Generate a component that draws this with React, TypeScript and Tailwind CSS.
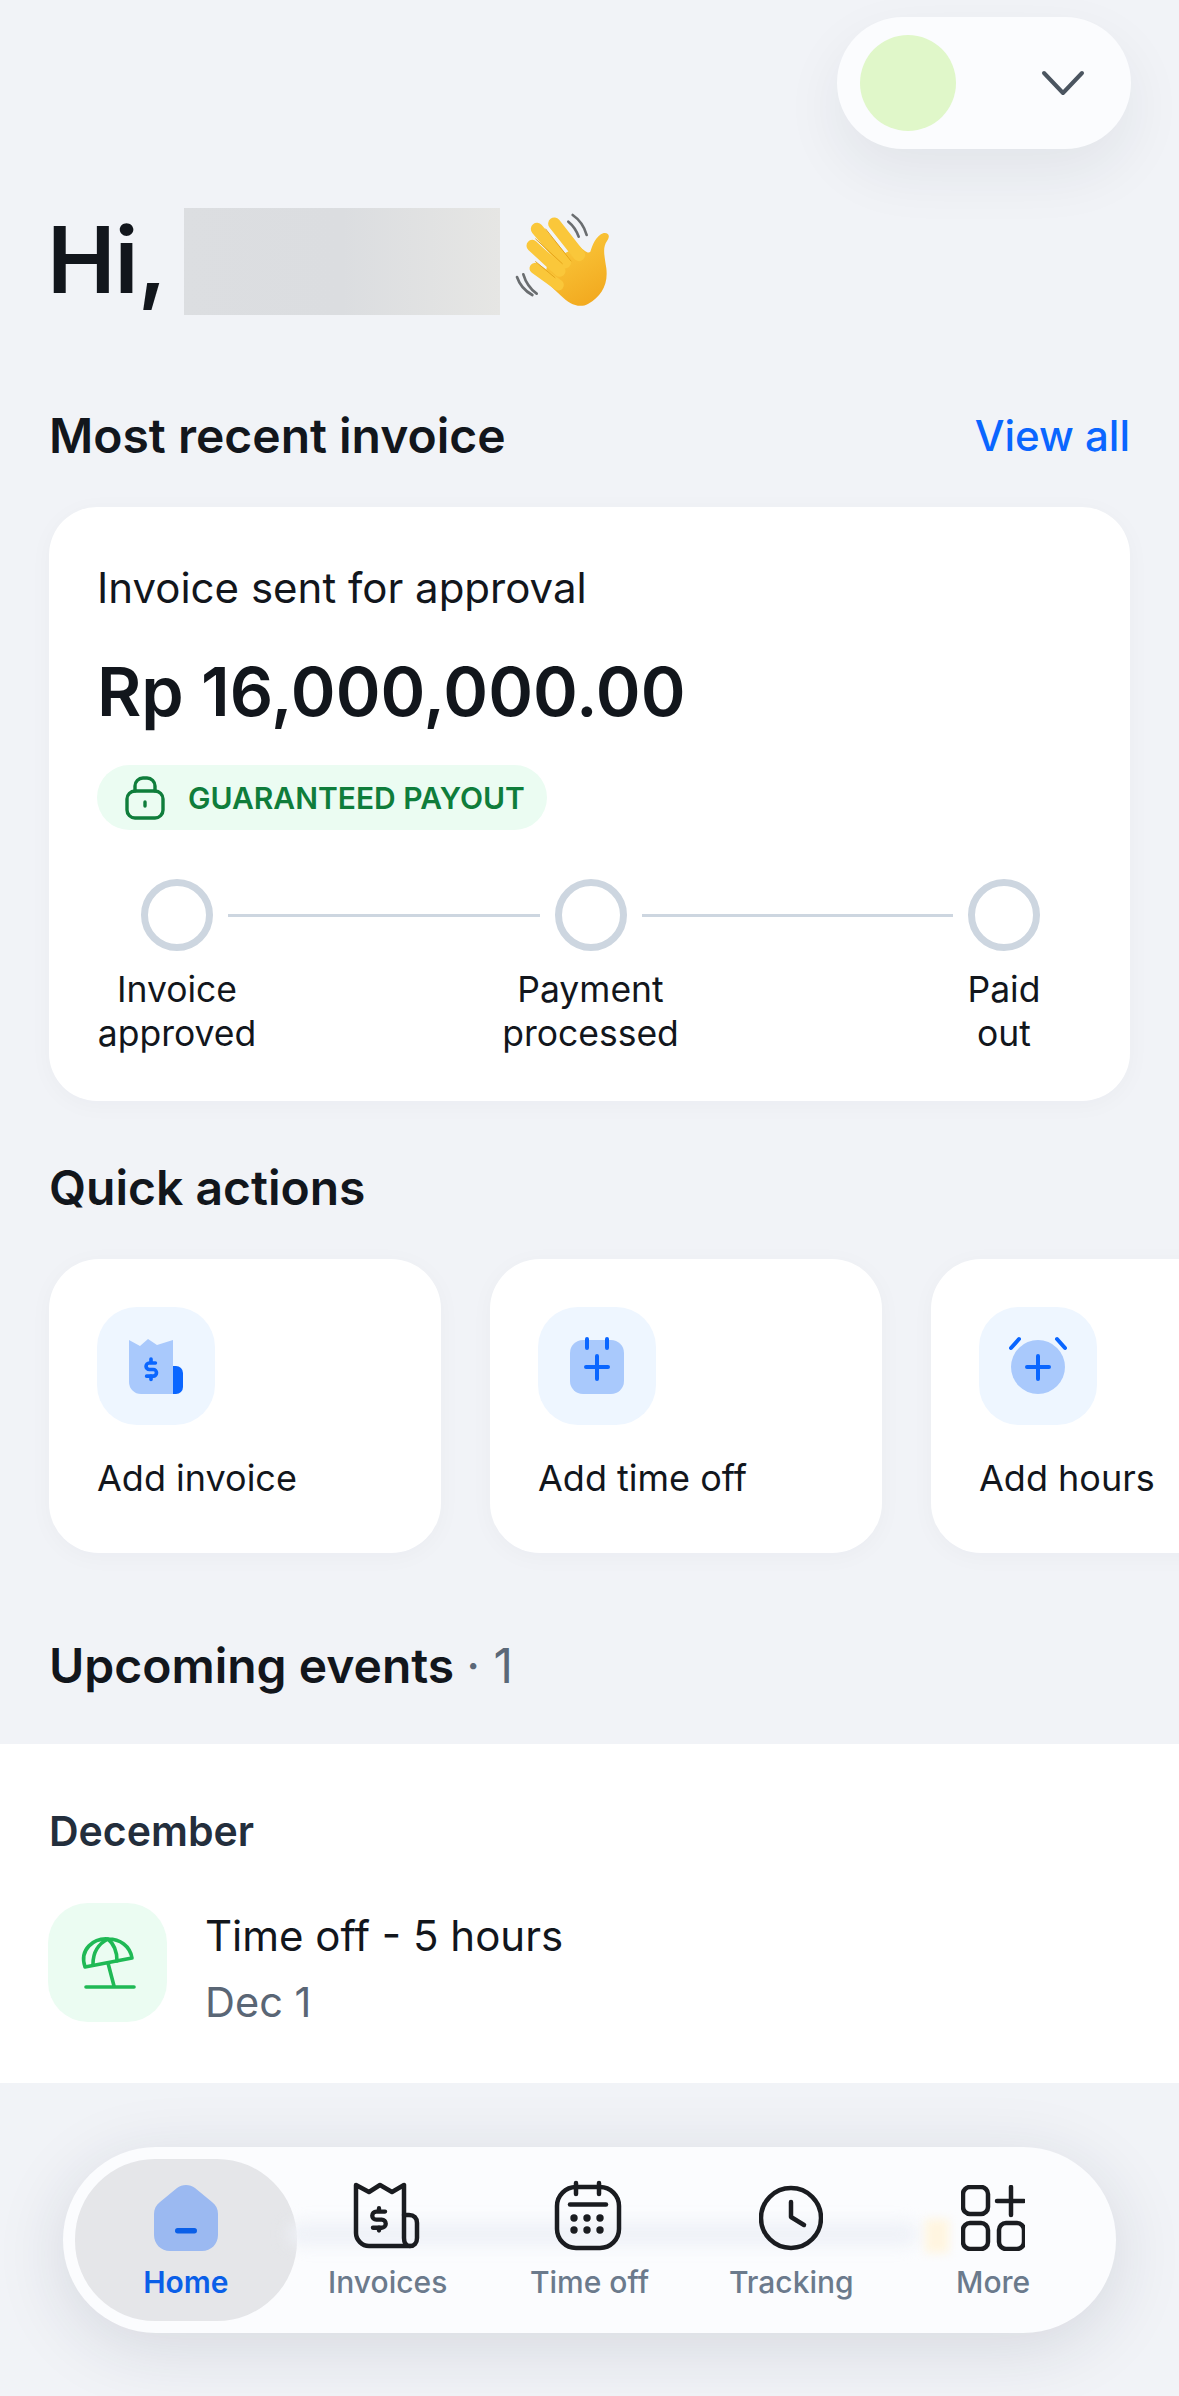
import React from 'react';

const Wave = () => (
  <svg width="115" height="110" viewBox="0 0 345 330" className="ml-[5px] shrink-0">
    <defs>
      <linearGradient id="palm" x1="0.2" y1="0" x2="0.7" y2="1">
        <stop offset="0" stopColor="#fbcb3e" />
        <stop offset="1" stopColor="#f2a91f" />
      </linearGradient>
    </defs>
    <g fill="none" stroke="#6a6d70" strokeWidth="8" strokeLinecap="round">
      <path d="M203 30 C225 45 238 65 245 90" />
      <path d="M190 50 C205 62 215 78 221 95" />
      <path d="M55 208 C62 232 76 252 95 266" />
      <path d="M36 216 C44 240 60 258 82 270" />
    </g>
    <path d="M128 172 L222 122 C240 140 250 146 256 140 C262 122 272 92 296 84 C312 82 316 94 306 108 C292 128 298 150 304 190 C310 240 288 274 250 296 C222 312 192 296 168 272 L118 226 Z" fill="url(#palm)" />
    <g fill="none" stroke="#fac73a" strokeLinecap="round">
      <path d="M96 72 L180 172" strokeWidth="37" />
      <path d="M148 56 L222 150" strokeWidth="37" />
      <path d="M82 122 L164 198" strokeWidth="35" />
      <path d="M90 190 L160 240" strokeWidth="33" />
    </g>
    <g fill="none" stroke="#e5a41a" strokeWidth="3" strokeLinecap="round">
      <path d="M122 72 L198 168" />
      <path d="M92 102 L172 176" />
      <path d="M92 170 L150 218" />
    </g>
  </svg>
);

const Chevron = () => (
  <svg width="44" height="28" viewBox="0 0 44 28" fill="none" stroke="#4b5560" strokeWidth="4" strokeLinecap="round" strokeLinejoin="round">
    <path d="M3 4 L22 24 L41 4" />
  </svg>
);

const Lock = () => (
  <svg width="40" height="44" viewBox="0 0 40 44" fill="none" stroke="#0f7d3b" strokeWidth="3.4" strokeLinecap="round" className="shrink-0">
    <rect x="2" y="15" width="36" height="27" rx="8" />
    <path d="M10 15 V10 a8 8 0 0 1 8 -8 h4 a8 8 0 0 1 8 8 V15" />
    <path d="M20 26 V30" />
  </svg>
);

const AddInvoiceIcon = () => (
  <svg width="118" height="118" viewBox="0 0 118 118">
    <path d="M32 33 L43 39 L51 32 L60 38 L76 33 V87 H44 a12 12 0 0 1 -12 -12 Z" fill="#a9c9fc" />
    <path d="M76 59 h3 a7 7 0 0 1 7 7 V80 a7 7 0 0 1 -7 7 h-3 Z" fill="#0a66ff" />
    <g transform="translate(54 62) scale(1.1) translate(-12 -12)" fill="none" stroke="#0a66ff" strokeWidth="3.3" strokeLinecap="round">
      <path d="M16 6.5H10.5a3 3 0 0 0 0 6h3.5a3 3 0 0 1 0 6H8" />
      <path d="M12 3v3M12 18.5v3" />
    </g>
  </svg>
);

const AddTimeOffIcon = () => (
  <svg width="118" height="118" viewBox="0 0 118 118">
    <rect x="32" y="33" width="54" height="54" rx="13" fill="#a9c9fc" />
    <g fill="none" stroke="#0a66ff" strokeWidth="4" strokeLinecap="round">
      <path d="M49 32 V41 M69 32 V41" />
      <path d="M59 49 V72 M48 60 H70" />
    </g>
  </svg>
);

const AddHoursIcon = () => (
  <svg width="118" height="118" viewBox="0 0 118 118">
    <circle cx="59" cy="60" r="27" fill="#a9c9fc" />
    <g fill="none" stroke="#0a66ff" strokeWidth="4" strokeLinecap="round">
      <path d="M40 32 L32 41 M78 32 L86 41" />
      <path d="M59 49 V72 M48 60 H70" />
    </g>
  </svg>
);

const UmbrellaIcon = () => (
  <svg width="119" height="119" viewBox="0 0 119 119" fill="none" stroke="#1fb955" strokeWidth="3.6" strokeLinecap="round" strokeLinejoin="round">
    <path d="M37 64 C31 46 46 35 60 36 C72 36 82 43 84 55 Z" />
    <path d="M45 61 C45 50 50 41 60 36 C66 41 69 49 69 58" />
    <path d="M60 60 L66 83" />
    <path d="M38 84 H86" />
  </svg>
);

const HomeIcon = () => (
  <svg width="64" height="66" viewBox="0 0 64 66">
    <path d="M23 3 C28 -1 36 -1 41 3 L58 17 C62 20 64 24 64 29 V50 C64 59 57 66 48 66 H16 C7 66 0 59 0 50 V29 C0 24 2 20 6 17 Z" fill="#9bb9f1" />
    <rect x="21" y="43" width="22" height="5.5" rx="2.7" fill="#0a5fe8" />
  </svg>
);

const ReceiptIcon = () => (
  <svg width="100" height="100" viewBox="0 0 100 100" fill="none" stroke="#1a1c20" strokeWidth="4.5" strokeLinecap="round" strokeLinejoin="round" className="-m-[17px]">
    <path d="M18 17 L31 24 L42 17 L54 24 L66 17 V70 C66 75 68 78 72 78 H31 C24 78 18 72 18 65 Z" />
    <path d="M66 47 H71 C76 47 79 50 79 55 V70 C79 75 76 78 72 78" />
    <g transform="translate(41 51) scale(1.35) translate(-12 -12)" strokeWidth="3.2">
      <path d="M16.5 6.5H10a3 3 0 0 0 0 6h4a3 3 0 0 1 0 6H7.5" />
      <path d="M12 4v2M12 18.5v2" />
    </g>
  </svg>
);

const CalendarIcon = () => (
  <svg width="100" height="100" viewBox="0 0 100 100" fill="none" stroke="#1a1c20" strokeWidth="4.5" strokeLinecap="round" className="-m-[17px]">
    <rect x="18" y="19" width="62" height="61" rx="19" />
    <path d="M37 15 V26 M60 15 V26" />
    <path d="M31 36.5 H67" />
    <g fill="#1a1c20" stroke="none">
      <circle cx="35" cy="50" r="3.7" />
      <circle cx="48" cy="50" r="3.7" />
      <circle cx="61" cy="50" r="3.7" />
      <circle cx="35" cy="62" r="3.7" />
      <circle cx="48" cy="62" r="3.7" />
      <circle cx="61" cy="62" r="3.7" />
    </g>
  </svg>
);

const ClockIcon = () => (
  <svg width="64" height="66" viewBox="0 0 64 66" fill="none" stroke="#1a1c20" strokeWidth="4.5" strokeLinecap="round" strokeLinejoin="round">
    <circle cx="32" cy="33" r="30" />
    <path d="M32 17 V32 L45 40" />
  </svg>
);

const MoreIcon = () => (
  <svg width="64" height="66" viewBox="0 0 64 66" fill="none" stroke="#1a1c20" strokeWidth="4.5" strokeLinecap="round">
    <rect x="2" y="2" width="25" height="27" rx="7" />
    <rect x="2" y="38" width="25" height="26" rx="7" />
    <rect x="38" y="38" width="25" height="26" rx="7" />
    <path d="M50 2 V30 M36 16 H63" />
  </svg>
);

const steps = [['Invoice', 'approved'], ['Payment', 'processed'], ['Paid', 'out']];

const Circle = () => <div className="w-[72px] h-[72px] shrink-0 rounded-full border-[7px] border-[#cdd6e0]" />;

const actions = [
  { label: 'Add invoice', icon: <AddInvoiceIcon /> },
  { label: 'Add time off', icon: <AddTimeOffIcon /> },
  { label: 'Add hours', icon: <AddHoursIcon /> },
];

const tabs = [
  { label: 'Invoices', icon: <ReceiptIcon /> },
  { label: 'Time off', icon: <CalendarIcon /> },
  { label: 'Tracking', icon: <ClockIcon /> },
  { label: 'More', icon: <MoreIcon /> },
];

const SectionTitle = ({ children }: { children: React.ReactNode }) => (
  <h2 className="text-[48px] leading-[54px] font-semibold text-[#12161c]">{children}</h2>
);

export default function App() {
  return (
    <div className="relative w-[1179px] h-[2396px] overflow-hidden bg-[#f1f3f7] [font-family:Inter,sans-serif] text-[#12161c]">
      {/* Account switcher */}
      <div className="flex justify-end pt-[17px] pr-[48px]">
        <div className="flex items-center w-[294px] h-[132px] rounded-[66px] bg-[#fbfcfe] pl-[23px] pr-[46px] shadow-[0_24px_60px_rgba(30,40,60,0.07)]">
          <div className="w-[96px] h-[96px] rounded-full bg-[#e0f7c9]" />
          <div className="ml-auto">
            <Chevron />
          </div>
        </div>
      </div>

      {/* Greeting */}
      <div className="flex items-center mt-[56px] pl-[47px] h-[110px]">
        <span className="w-[137px] text-[92px] leading-[110px] font-semibold tracking-[-1px]">Hi,</span>
        <div className="w-[316px] h-[107px] mt-[3px] bg-gradient-to-r from-[#dcdee1] via-[#dbdde0] to-[#e6e6e4]" />
        <Wave />
      </div>

      {/* Most recent invoice */}
      <section className="mt-[94px] px-[49px]">
        <div className="flex items-center justify-between">
          <SectionTitle>Most recent invoice</SectionTitle>
          <a className="text-[42px] leading-[54px] font-medium text-[#0a66ff]">View all</a>
        </div>
        <div className="mt-[44px] rounded-[48px] bg-white pt-[56px] pl-[48px] pr-[46px] pb-[45px] shadow-[0_4px_24px_rgba(30,40,60,0.03)]">
          <p className="text-[42px] leading-[50px]">Invoice sent for approval</p>
          <p className="mt-[36px] text-[68px] leading-[84px] font-semibold">Rp 16,000,000.00</p>
          <div className="mt-[32px] inline-flex items-center h-[65px] w-[450px] rounded-full bg-[#ebfcf2] pl-[28px]">
            <Lock />
            <span className="ml-[23px] text-[30px] leading-[36px] font-semibold text-[#0f7d3b]">GUARANTEED PAYOUT</span>
          </div>
          <div className="mt-[49px] flex items-center gap-[15px] px-[44px]">
            <Circle />
            <div className="flex-1 h-[3px] bg-[#cdd6e0]" />
            <Circle />
            <div className="flex-1 h-[3px] bg-[#cdd6e0]" />
            <Circle />
          </div>
          <div className="mt-[17px] -mx-[10px] flex justify-between">
            {steps.map(([a, b]) => (
              <div key={a} className="w-[180px] text-center text-[35.5px] leading-[44px]">
                <div>{a}</div>
                <div>{b}</div>
              </div>
            ))}
          </div>
        </div>
      </section>

      {/* Quick actions */}
      <section className="mt-[60px]">
        <div className="px-[49px]">
          <SectionTitle>Quick actions</SectionTitle>
        </div>
        <div className="mt-[44px] flex gap-[49px] pl-[49px] w-max">
          {actions.map((action) => (
            <div key={action.label} className="w-[392px] h-[294px] shrink-0 rounded-[50px] bg-white pt-[48px] pl-[48px] shadow-[0_4px_24px_rgba(30,40,60,0.03)]">
              <div className="w-[118px] h-[118px] rounded-[40px] bg-[#eef6ff]">{action.icon}</div>
              <p className="mt-[30px] text-[36px] leading-[46px]">{action.label}</p>
            </div>
          ))}
        </div>
      </section>

      {/* Upcoming events */}
      <section className="mt-[86px]">
        <div className="px-[49px]">
          <SectionTitle>
            Upcoming events <span className="font-normal text-[#5b6878]">· 1</span>
          </SectionTitle>
        </div>
        <div className="mt-[51px] bg-white pt-[64px] pb-[57px] pl-[49px]">
          <p className="text-[41px] leading-[46px] font-semibold text-[#232e3c]">December</p>
          <div className="mt-[49px] flex">
            <div className="w-[119px] h-[119px] -ml-[1px] rounded-[40px] bg-[#ebfcf2]">
              <UmbrellaIcon />
            </div>
            <div className="ml-[38px] pt-[8px]">
              <p className="text-[42px] leading-[50px]">Time off - 5 hours</p>
              <p className="mt-[17px] text-[41.5px] leading-[48px] text-[#5a6675]">Dec 1</p>
            </div>
          </div>
        </div>
      </section>

      {/* Floating tab bar */}
      <nav className="absolute left-[63px] top-[2147px] w-[1053px] h-[186px] rounded-[93px] bg-[#fbfcfe] shadow-[0_14px_70px_rgba(30,40,60,0.13)] overflow-hidden">
        <div className="absolute left-[12px] top-[12px] w-[222px] h-[162px] rounded-[80px] bg-[#e5e6e9]" />
        <div className="absolute left-[225px] top-[76px] w-[630px] h-[22px] rounded-full bg-[#eef1f7] blur-[8px]" />
        <div className="absolute left-[862px] top-[72px] w-[24px] h-[34px] bg-[#fff5e0] blur-[5px]" />
        <div className="relative grid grid-cols-5 px-[22px] pt-[38px]">
          <div className="flex flex-col items-center">
            <div className="h-[66px]">
              <HomeIcon />
            </div>
            <span className="mt-[13px] text-[30px] leading-[36px] font-semibold text-[#0a5fe8]">Home</span>
          </div>
          {tabs.map((tab) => (
            <div key={tab.label} className="flex flex-col items-center">
              <div className="h-[66px]">{tab.icon}</div>
              <span className="mt-[13px] text-[30px] leading-[36px] font-medium text-[#6b7a8c]">{tab.label}</span>
            </div>
          ))}
        </div>
      </nav>
    </div>
  );
}
